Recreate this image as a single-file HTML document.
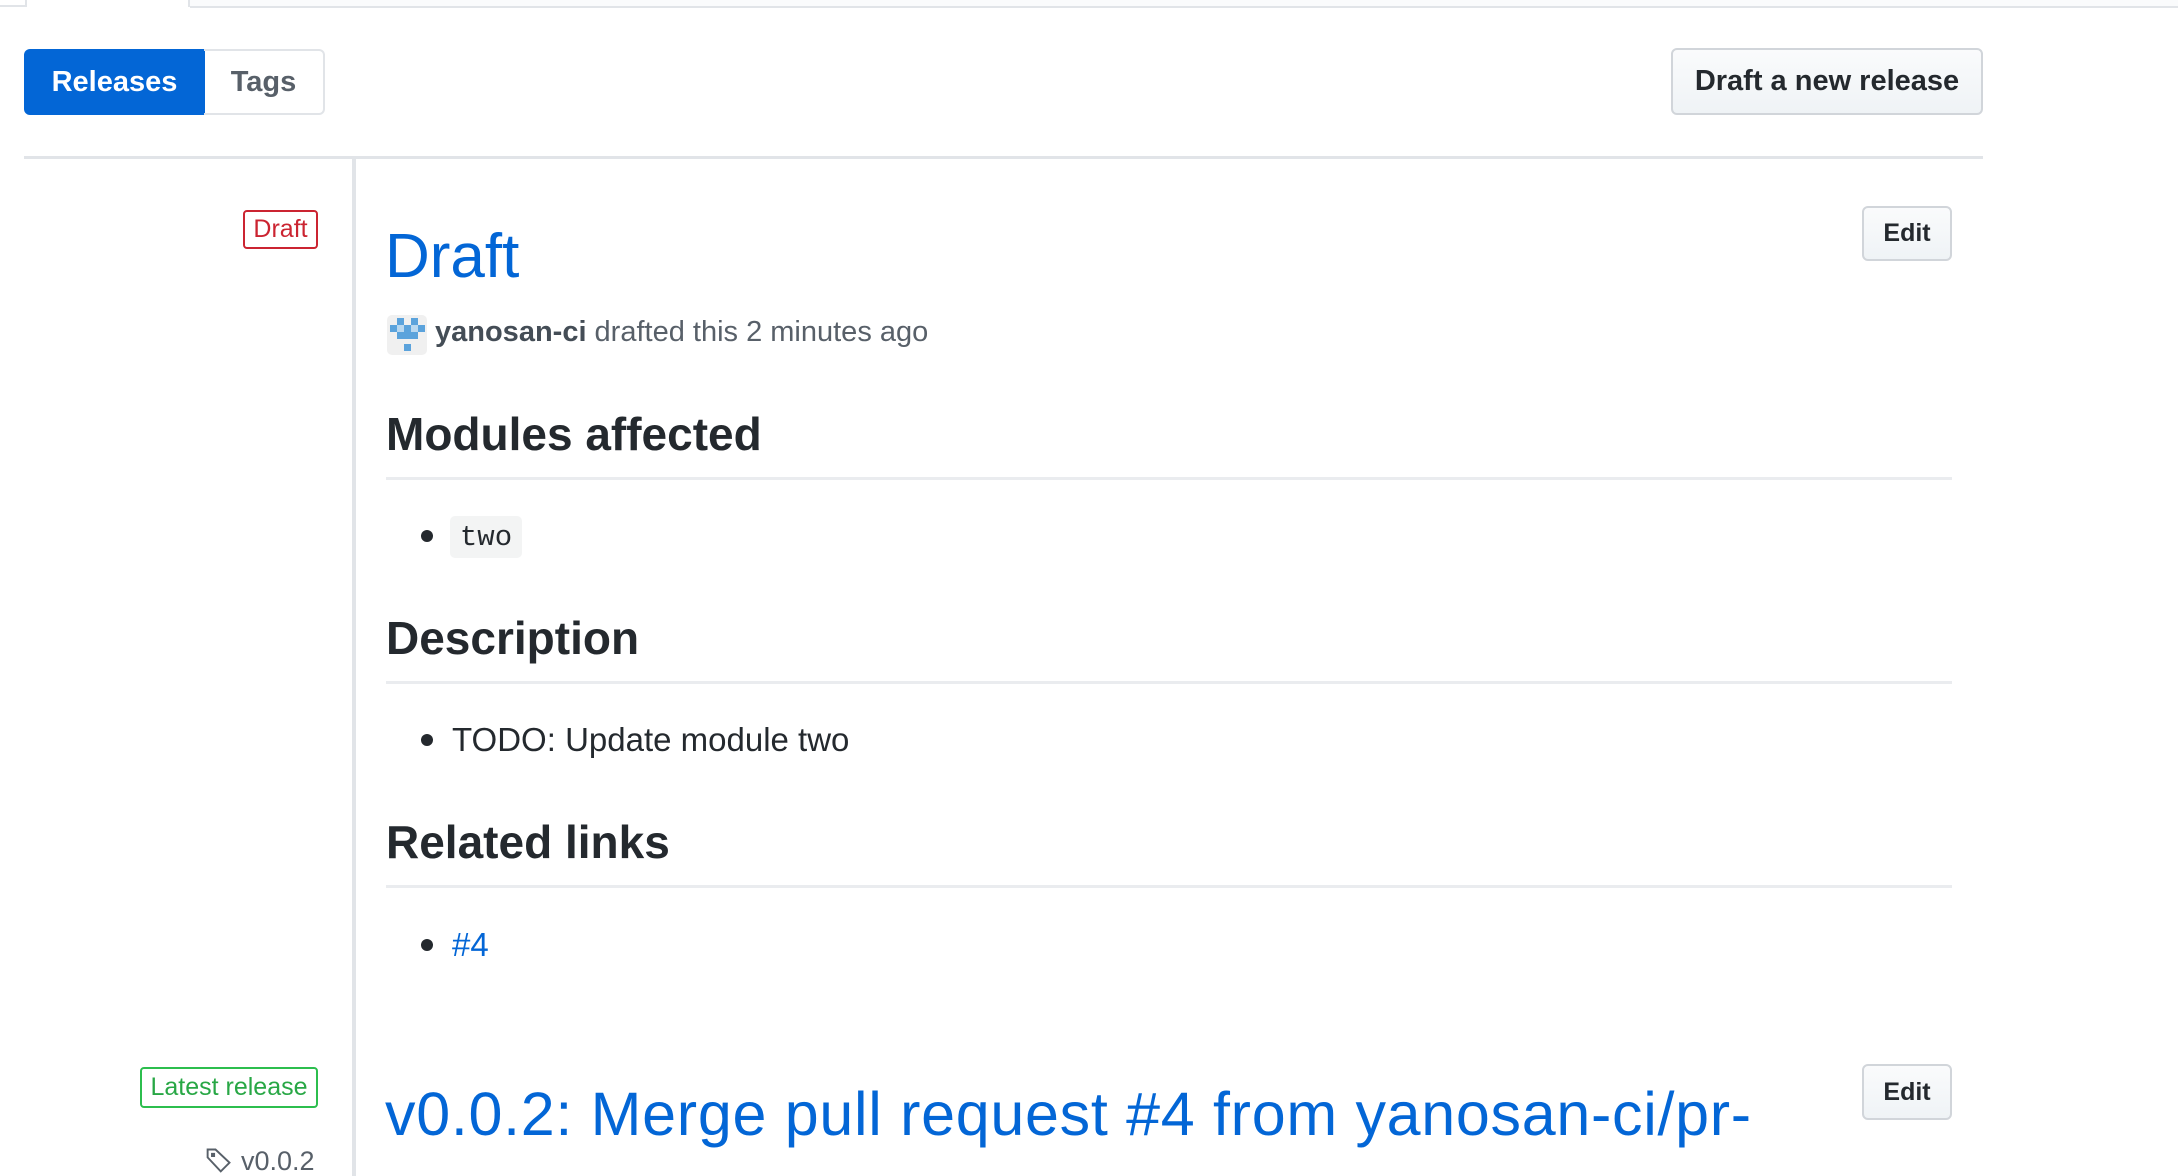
<!DOCTYPE html>
<html><head><meta charset="utf-8"><style>
*{margin:0;padding:0;box-sizing:border-box}
body{width:2178px;height:1176px;overflow:hidden;background:#fff;font-family:"Liberation Sans",Arial,sans-serif;color:#24292e;position:relative}
.a{position:absolute;white-space:nowrap}
.btn{position:absolute;border:2px solid #d1d5da;border-radius:6px;background:linear-gradient(#fafbfc,#eff3f6);font-weight:bold;color:#24292e;display:flex;align-items:center;justify-content:center}
.h2{position:absolute;left:386px;font-size:46px;font-weight:bold;line-height:1}
.hr{position:absolute;left:386px;width:1566px;height:3px;background:#eaecef}
.li{position:absolute;left:452px;font-size:33px;line-height:1}
.dot{position:absolute;left:421px;width:12px;height:12px;border-radius:50%;background:#24292e}
</style></head><body>
<div class="a" style="left:0;top:0;width:25px;height:7px;border-bottom:2px solid #e1e4e8"></div>
<div class="a" style="left:25px;top:0;width:165px;height:7px;border-left:2px solid #e1e4e8;border-right:2px solid #e1e4e8"></div>
<div class="a" style="left:190px;top:0;width:1988px;height:8px;background:#fafbfc;border-bottom:2px solid #e1e4e8"></div>

<div class="a" style="left:24px;top:49px;width:181px;height:66px;background:#0366d6;border-radius:6px 0 0 6px;color:#fff;font-weight:bold;font-size:29px;display:flex;align-items:center;justify-content:center">Releases</div>
<div class="a" style="left:204px;top:49px;width:121px;height:66px;border:2px solid #e1e4e8;border-left:none;border-radius:0 6px 6px 0;color:#586069;font-weight:bold;font-size:29px;display:flex;align-items:center;justify-content:center">Tags</div>
<div class="btn" style="left:1671px;top:48px;width:312px;height:67px;font-size:29px">Draft a new release</div>

<div class="a" style="left:24px;top:156px;width:1959px;height:3px;background:#e1e4e8"></div>
<div class="a" style="left:352px;top:158px;width:4px;height:1018px;background:#e1e4e8"></div>

<div class="a" style="left:243px;top:210px;width:75px;height:39px;border:2px solid #cb2431;border-radius:4px;color:#cb2431;font-size:25px;display:flex;align-items:center;justify-content:center">Draft</div>
<div class="a" style="left:385px;top:226px;font-size:62px;color:#0366d6;line-height:1">Draft</div>
<div class="btn" style="left:1862px;top:206px;width:90px;height:55px;font-size:25px">Edit</div>

<svg class="a" style="left:387px;top:315px" width="40" height="40" viewBox="0 0 40 40">
<rect width="40" height="40" rx="5" fill="#f0f0f0"/>
<g fill="#5ba3dc">
<rect x="10" y="3" width="7" height="7"/><rect x="24" y="3" width="7" height="7"/>
<rect x="3" y="10" width="7" height="7"/><rect x="17" y="10" width="7" height="7"/><rect x="31" y="10" width="7" height="7"/>
<rect x="10" y="17" width="21" height="7"/>
<rect x="17" y="29" width="7" height="7"/>
</g><g fill="#b9d8f0"><rect x="10" y="10" width="7" height="7"/><rect x="24" y="10" width="7" height="7"/></g>
</svg>
<div class="a" style="left:435px;top:318px;font-size:29px;color:#586069;line-height:1"><b style="color:#444d56">yanosan-ci</b> drafted this 2 minutes ago</div>

<div class="h2" style="top:411px">Modules affected</div>
<div class="hr" style="top:477px"></div>
<div class="dot" style="top:530px"></div>
<div class="a" style="left:450px;top:516px;width:72px;height:42px;background:#f3f4f4;border-radius:5px;font-family:'Liberation Mono',monospace;font-size:29px;display:flex;align-items:center;justify-content:center">two</div>

<div class="h2" style="top:615px">Description</div>
<div class="hr" style="top:681px"></div>
<div class="dot" style="top:734px"></div>
<div class="li" style="top:723px">TODO: Update module two</div>

<div class="h2" style="top:819px">Related links</div>
<div class="hr" style="top:885px"></div>
<div class="dot" style="top:939px"></div>
<div class="li" style="top:928px;color:#0366d6">#4</div>

<div class="a" style="left:140px;top:1067px;width:178px;height:41px;border:2px solid #2cbe4e;border-radius:4px;color:#28a745;font-size:25px;display:flex;align-items:center;justify-content:center">Latest release</div>
<div class="a" style="left:385px;top:1084px;font-size:61px;letter-spacing:0.7px;color:#0366d6;line-height:1">v0.0.2: Merge pull request #4 from yanosan-ci/pr-</div>
<div class="btn" style="left:1862px;top:1064px;width:90px;height:56px;font-size:25px">Edit</div>

<svg class="a" style="left:205px;top:1146px" width="28" height="28" viewBox="0 0 16 16"><path fill="none" stroke="#586069" stroke-width="1.1" d="M1.5 2.5v4l7.5 8 5-5-8-7.5h-4.5z M4 4.5h1.2v1.2H4z"/></svg>
<div class="a" style="left:241px;top:1148px;font-size:27px;color:#586069;line-height:1">v0.0.2</div>
</body></html>
